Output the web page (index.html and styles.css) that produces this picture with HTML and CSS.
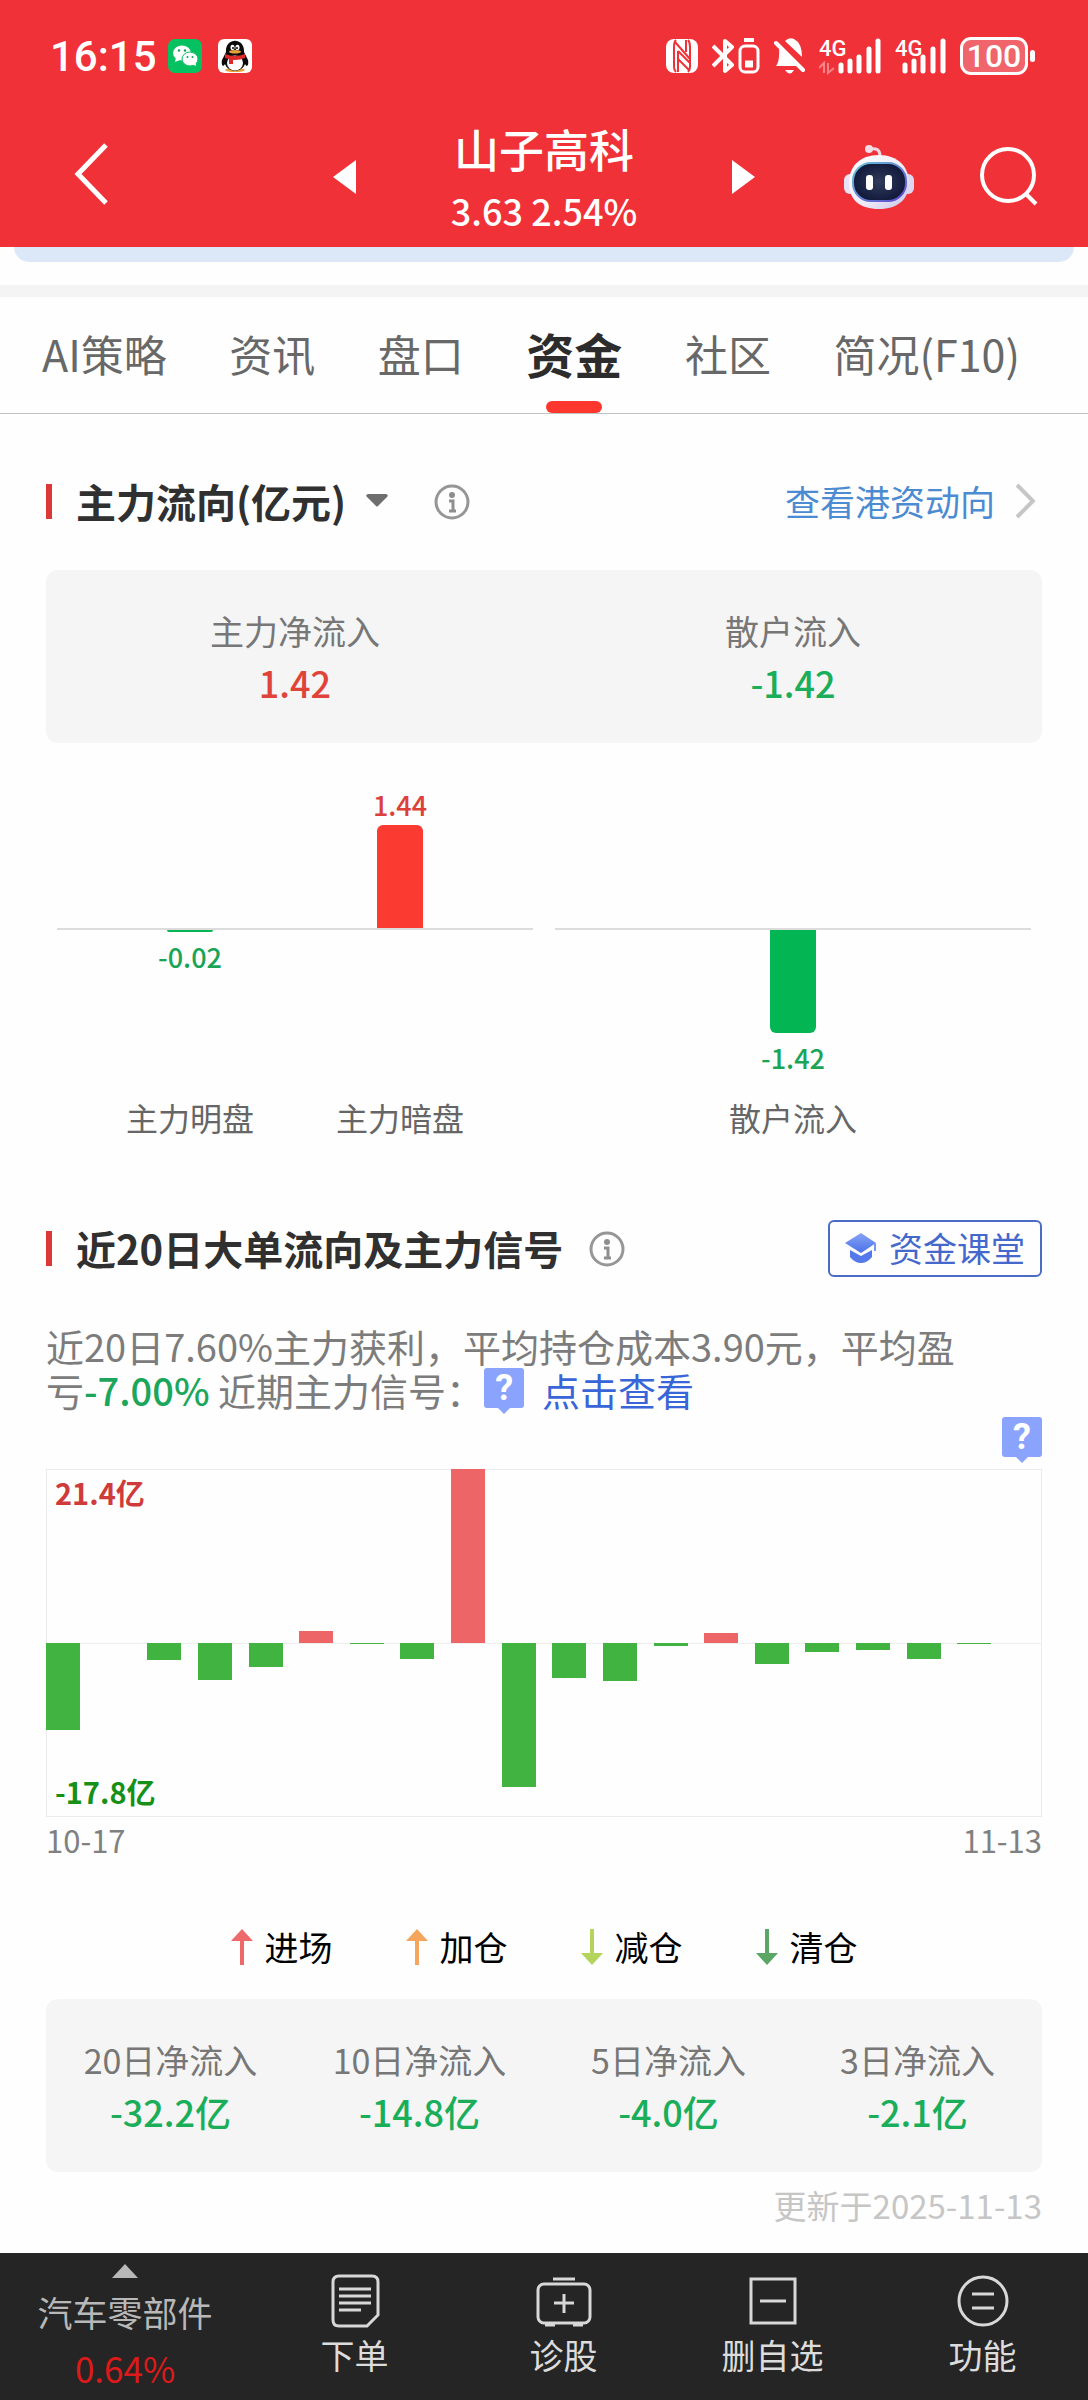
FILE: index.html
```
<!DOCTYPE html>
<html lang="zh-CN">
<head>
<meta charset="utf-8">
<meta name="viewport" content="width=device-width, initial-scale=1">
<title>山子高科 - 资金</title>
<link rel="stylesheet" href="styles.css">
</head>
<body>
<header class="top">
  <div class="status">
    <span class="clock">16:15</span>
    <svg class="app-icon" viewBox="0 0 34 34" aria-label="微信"><rect width="34" height="34" rx="7" fill="#05c160"/><g fill="#fff"><ellipse cx="14" cy="14" rx="9" ry="7.500"/><path d="M8 18l-1 5 5-2z"/><ellipse cx="22" cy="20" rx="8" ry="7" stroke="#05c160"/><path d="M24 25l4 2-.5-4z"/></g><g fill="#05a050"><circle cx="11" cy="11.500" r="1.200"/><circle cx="17" cy="11.500" r="1.200"/><circle cx="19.500" cy="18" r="1"/><circle cx="24.500" cy="18" r="1"/></g></svg>
    <svg class="app-icon qq" viewBox="0 0 34 34" aria-label="QQ"><rect width="34" height="34" rx="6" fill="#fff"/><ellipse cx="17" cy="31" rx="10" ry="2" fill="#e6a43a"/><path d="M8 13c-1-15 19-15 18 0l4 8c1 5-1 8-3 4-3 9-17 9-20 0-2 4-4 1-3-4z" fill="#0a0a0a"/><ellipse cx="17" cy="24" rx="8" ry="7.500" fill="#fff"/><ellipse cx="14.500" cy="8.500" rx="2" ry="2.800" fill="#fff"/><ellipse cx="19.500" cy="8.500" rx="2" ry="2.800" fill="#fff"/><circle cx="15" cy="9" r="1"/><circle cx="19" cy="9" r="1"/><ellipse cx="17" cy="12.800" rx="6" ry="1.700" fill="#eaa13a"/><path d="M7 15q10 4 20 0v4q-6 2.500-12 2v4h-4v-5l-4-1z" fill="#dd2a2a"/></svg>
    <div class="indicators">
      <svg width="32" height="34" viewBox="0 0 32 34" aria-label="NFC"><rect width="32" height="34" rx="8" fill="#fff"/><g fill="none" stroke="#f03138" stroke-width="2"><path d="M10 1Q8 3 8 8v20q0 3 2 5M22 33q2-2 2-5V8q0-5-2-7M12 12v21M20 1v12M9 3l15 17M12 12l12 12M12 20l11 11"/></g></svg>
      <svg class="bt" width="48" height="36" viewBox="0 0 48 36" fill="none" stroke="#fff" aria-label="蓝牙"><path d="M1 8l19 19-7 6V3l7 6L1 28" stroke-width="4" stroke-linejoin="round"/><rect x="28" y="8" width="18" height="26" rx="5" stroke-width="3"/><path d="M32 2h10" stroke-width="4"/><path d="M33 26h8" stroke-width="7"/></svg>
      <svg class="bell" width="31" height="36" viewBox="0 0 31 36" fill="#fff" aria-label="静音"><path d="M11 3Q15-1 20 1q8 4 8 18zM5 9l19 19H2q4-5 3-19zM11 32h9q-4 7-9 0z"/><path d="M2 5l27 27" stroke="#fff" stroke-width="4" stroke-linecap="round"/></svg>
      <svg class="signal" width="64" height="38" viewBox="0 0 64 38" aria-label="信号"><text x="0" y="19">4G</text><g stroke="#fff" stroke-width="5" stroke-linecap="round"><path d="M22 28v6M31 24v10M40 20v14M50 12v22M59 4v30"/></g><path d="M0 31l5-5v10M9 26v10l6-5" stroke="#f98488" stroke-width="2" fill="none"/></svg>
      <svg class="signal second" width="52" height="38" viewBox="0 0 52 38" aria-label="信号"><text x="0" y="19">4G</text><g stroke="#fff" stroke-width="5" stroke-linecap="round"><path d="M10 28v6M19 24v10M28 20v14M38 12v22M48 4v30"/></g></svg>
      <span class="battery">100</span>
    </div>
  </div>
  <div class="titlebar">
    <div class="bar-left">
      <button type="button" aria-label="返回"><svg width="34" height="62" viewBox="0 0 34 62" fill="none" stroke="#fff" stroke-width="5"><path d="M32 2L4 31l28 29"/></svg></button>
    </div>
    <div class="bar-mid">
      <button type="button" aria-label="上一只"><svg width="23" height="34" viewBox="0 0 23 34"><path d="M23 0v34L0 17z" fill="#fff"/></svg></button>
      <div class="stock"><h1>山子高科</h1><p>3.63 2.54%</p></div>
      <button type="button" aria-label="下一只"><svg width="23" height="34" viewBox="0 0 23 34"><path d="M0 0v34l23-17z" fill="#fff"/></svg></button>
    </div>
    <div class="bar-right">
      <button type="button" aria-label="智能助手"><svg width="70" height="66" viewBox="0 0 70 66">
        <defs><linearGradient id="shell" x2="1" y2="1"><stop offset="0" stop-color="#fff"/><stop offset=".6" stop-color="#eeeaf8"/><stop offset="1" stop-color="#c4c2e6"/></linearGradient><linearGradient id="rim" x2="1" y2="1"><stop offset="0" stop-color="#65c6d8"/><stop offset="1" stop-color="#6043cc"/></linearGradient><radialGradient id="visor"><stop offset="0" stop-color="#303a5a"/><stop offset="1" stop-color="#121b3c"/></radialGradient></defs>
        <path d="M26 5q10-2 10 7" fill="none" stroke="#efd6e2" stroke-width="3"/><circle cx="25" cy="5" r="4" fill="#f3dce6"/>
        <rect y="30" width="12" height="20" rx="6" fill="#e8e4f5"/><rect x="58" y="30" width="12" height="20" rx="6" fill="#dcd8f0"/>
        <path d="M35 11C54 11 65 23 65 39S54 65 35 65 5 56 5 39s11-28 30-28z" fill="url(#shell)"/>
        <rect x="9" y="19" width="53" height="38" rx="18" fill="url(#visor)" stroke="url(#rim)" stroke-width="2"/>
        <rect x="22" y="31" width="7" height="15" rx="3" fill="#fff"/><rect x="41" y="31" width="7" height="15" rx="3" fill="#fff"/></svg></button>
      <button type="button" aria-label="搜索"><svg width="58" height="60" viewBox="0 0 58 60" fill="none" stroke="#fff" stroke-width="4"><circle cx="28" cy="28" r="26"/><path d="M46 47l10 10"/></svg></button>
    </div>
  </div>
</header>
<div class="banner-edge"></div>

<nav class="tabs" aria-label="栏目">
  <a href="#ai">AI策略</a>
  <a href="#news">资讯</a>
  <a href="#quote">盘口</a>
  <a href="#fund" class="active" aria-current="page">资金</a>
  <a href="#club">社区</a>
  <a href="#f10">简况(F10)</a>
</nav>

<main>
  <section class="flow">
    <div class="head">
      <h2><button type="button">主力流向(亿元)<svg width="22" height="13" viewBox="0 0 22 13"><path d="M2 0h18q3 1 1 3l-9 9q-1 1-2 0L1 3q-2-2 1-3z" fill="#6e6e6e"/></svg></button></h2>
      <button type="button" class="info wide" aria-label="说明"><svg width="36" height="36" viewBox="0 0 36 36"><circle cx="18" cy="18" r="16" fill="none" stroke="#969696" stroke-width="3"/><circle cx="18" cy="11" r="3" fill="#8e8e8e"/><path d="M15 17h4v10M15 27h7" fill="none" stroke="#8e8e8e" stroke-width="3"/></svg></button>
      <a class="more" href="#hk">查看港资动向<svg width="20" height="36" viewBox="0 0 20 36" fill="none" stroke="#c6c6c6" stroke-width="4"><path d="M2 2l16 16L2 34"/></svg></a>
    </div>
    <dl class="card two">
      <div><dt>主力净流入</dt><dd class="up">1.42</dd></div>
      <div><dt>散户流入</dt><dd class="down">-1.42</dd></div>
    </dl>
    <div class="plots">
      <div class="plot">
        <div class="col"><div class="above"></div><div class="below"><i style="height:2px"></i><b>-0.02</b></div><span>主力明盘</span></div>
        <div class="col"><div class="above"><b>1.44</b><i style="height:103px"></i></div><div class="below"></div><span>主力暗盘</span></div>
      </div>
      <div class="plot">
        <div class="col"><div class="above"></div><div class="below"><i style="height:103px"></i><b>-1.42</b></div><span>散户流入</span></div>
      </div>
    </div>
  </section>

  <section class="signal-section">
    <div class="head">
      <h2>近20日大单流向及主力信号</h2>
      <button type="button" class="info" aria-label="说明"><svg width="36" height="36" viewBox="0 0 36 36"><circle cx="18" cy="18" r="16" fill="none" stroke="#969696" stroke-width="3"/><circle cx="18" cy="11" r="3" fill="#8e8e8e"/><path d="M15 17h4v10M15 27h7" fill="none" stroke="#8e8e8e" stroke-width="3"/></svg></button>
      <button type="button" class="class-btn"><svg width="32" height="30" viewBox="0 0 32 30"><defs><linearGradient id="cap" x2="0" y2="1"><stop offset="0" stop-color="#86a5f6"/><stop offset="1" stop-color="#4a70e8"/></linearGradient></defs><path d="M16 0l15 10-15 10L0 10z" fill="url(#cap)"/><path d="M5 17l11 6 11-6v7q-5 6-11 6T5 24z" fill="#5579ea"/><path d="M30 10v8" stroke="#7896f2" stroke-width="2"/></svg>资金课堂</button>
    </div>
    <p class="summary">近20日7.60%主力获利，平均持仓成本3.90元，平均盈亏<strong>-7.00%</strong> 近期主力信号：<span class="mark">?</span><a href="#signal">点击查看</a></p>
    <div class="marks"><span class="mark">?</span></div>
    <div class="bars">
      <span class="max">21.4亿</span><span class="min">-17.8亿</span>
      <div class="neg"><i style="height:50%"></i></div>
      <div class="neg"><i style="height:0"></i></div>
      <div class="neg"><i style="height:10%"></i></div>
      <div class="neg"><i style="height:21%"></i></div>
      <div class="neg"><i style="height:14%"></i></div>
      <div class="pos"><i style="height:7%"></i></div>
      <div class="neg"><i style="height:1px"></i></div>
      <div class="neg"><i style="height:9%"></i></div>
      <div class="pos"><i style="height:100%"></i></div>
      <div class="neg"><i style="height:83%"></i></div>
      <div class="neg"><i style="height:20%"></i></div>
      <div class="neg"><i style="height:22%"></i></div>
      <div class="neg"><i style="height:2%"></i></div>
      <div class="pos"><i style="height:6%"></i></div>
      <div class="neg"><i style="height:12%"></i></div>
      <div class="neg"><i style="height:5%"></i></div>
      <div class="neg"><i style="height:4%"></i></div>
      <div class="neg"><i style="height:9%"></i></div>
      <div class="neg"><i style="height:1px"></i></div>
      <div class="neg"><i style="height:0"></i></div>
    </div>
    <div class="dates"><time>10-17</time><time>11-13</time></div>
    <ul class="legend">
      <li><svg viewBox="0 0 22 36" fill="#ee6a6a"><path d="M11 0l11 12H13v24H9V12H0z"/></svg>进场</li>
      <li><svg viewBox="0 0 22 36" fill="#f5a55c"><path d="M11 0l11 12H13v24H9V12H0z"/></svg>加仓</li>
      <li><svg viewBox="0 0 22 36" fill="#b4d45c"><path d="M11 36L0 24h9V0h4v24h9z"/></svg>减仓</li>
      <li><svg viewBox="0 0 22 36" fill="#5ba664"><path d="M11 36L0 24h9V0h4v24h9z"/></svg>清仓</li>
    </ul>
    <dl class="card four">
      <div><dt>20日净流入</dt><dd class="down">-32.2亿</dd></div>
      <div><dt>10日净流入</dt><dd class="down">-14.8亿</dd></div>
      <div><dt>5日净流入</dt><dd class="down">-4.0亿</dd></div>
      <div><dt>3日净流入</dt><dd class="down">-2.1亿</dd></div>
    </dl>
    <p class="updated">更新于2025-11-13</p>
  </section>
</main>

<nav class="dock" aria-label="操作">
  <button type="button" class="sector"><svg width="26" height="14" viewBox="0 0 26 14"><path d="M13 0l13 14H0z" fill="#b8b8b8"/></svg><span>汽车零部件</span><em>0.64%</em></button>
  <button type="button"><svg width="56" height="54" viewBox="0 0 56 54"><path d="M12 2h33q6 0 6 6v33L40 52H12q-6 0-6-6V8q0-6 6-6z"/><path d="M12 15h32M12 22h32M12 29h32M12 36h22"/></svg>下单</button>
  <button type="button"><svg width="56" height="54" viewBox="0 0 56 54"><rect x="2" y="10" width="52" height="39" rx="6"/><path d="M17 5h22M28 20v19M18 29h20M9 51h10M37 51h10"/></svg>诊股</button>
  <button type="button"><svg width="56" height="54" viewBox="0 0 56 54"><path d="M6 5h44v44H6zM15 27h26"/></svg>删自选</button>
  <button type="button"><svg width="56" height="54" viewBox="0 0 56 54"><circle cx="28" cy="27" r="24"/><path d="M17 20h22M17 34h22"/></svg>功能</button>
</nav>
</body>
</html>
```
FILE: styles.css
```
* { box-sizing: border-box; }
body {
  margin: 0;
  min-height: 100vh;
  display: flex;
  flex-direction: column;
  background: #fefefe;
  color: #303030;
  font-family: "Noto Sans CJK SC", "Noto Sans", sans-serif;
}
h1, h2, p, dl, dd, ul { margin: 0; padding: 0; }
button {
  padding: 0;
  border: 0;
  background: none;
  color: inherit;
  font: inherit;
  cursor: pointer;
}
svg { display: block; flex: none; }
a { text-decoration: none; }
i, em { font-style: normal; }

/* status bar and title bar */
.top { background: #f03138; color: #fff; }
.status {
  display: flex;
  align-items: center;
  height: 112px;
  padding: 0 60px 0 50px;
}
.clock {
  font-family: Roboto, "Noto Sans CJK SC", sans-serif;
  font-size: 42px;
  font-weight: 500;
  width: 118px;
}
.app-icon { width: 34px; height: 34px; }
.qq { margin-left: 16px; }
.indicators { display: flex; align-items: center; margin-left: auto; }
.bt { margin-left: 14px; }
.bell { margin-left: 14px; }
.signal { margin-left: 14px; }
.signal.second { margin-left: 12px; }
.signal text {
  fill: #fff;
  font-family: Roboto, sans-serif;
  font-size: 22px;
  font-weight: 500;
}
.battery {
  position: relative;
  width: 68px;
  height: 38px;
  margin-left: 13px;
  border: 3px solid #fff;
  border-radius: 11px;
  background: #f0646c;
  font: 500 32px/32px Roboto, sans-serif;
  text-align: center;
}
.battery::after {
  content: "";
  position: absolute;
  right: -10px;
  top: 10px;
  width: 5px;
  height: 12px;
  border-radius: 3px;
  background: #fff;
}
.titlebar {
  display: grid;
  grid-template-columns: 1fr 422px 1fr;
  align-items: center;
  padding-bottom: 6px;
}
.bar-left { padding-left: 74px; }
.bar-mid { display: flex; align-items: center; justify-content: space-between; }
.bar-right { display: flex; align-items: center; justify-content: flex-end; gap: 66px; padding-right: 50px; }
.stock { padding-top: 7px; text-align: center; }
.stock h1 { font-size: 45px; font-weight: 500; line-height: 60px; }
.stock p { font-size: 36px; font-weight: 500; line-height: 62px; }

.banner-edge { background: #fefefe; border-bottom: 12px solid #f4f4f4; padding: 0 14px 23px; }
.banner-edge::before {
  content: "";
  display: block;
  height: 15px;
  border-radius: 0 0 18px 18px;
  background: #dce8f7;
}

/* tabs */
.tabs {
  display: flex;
  align-items: stretch;
  justify-content: space-between;
  height: 117px;
  padding: 0 68px 0 42px;
  border-bottom: 1px solid #c2c2c2;
}
.tabs a {
  position: relative;
  color: #686868;
  font-size: 43px;
  line-height: 112px;
  white-space: nowrap;
}
.tabs .active { color: #2c2c2c; font-size: 48px; font-weight: 700; }
.tabs .active::after {
  content: "";
  position: absolute;
  left: 50%;
  bottom: 0;
  width: 56px;
  height: 12px;
  margin-left: -28px;
  border-radius: 6px;
  background: #fd372d;
}

/* section heads */
main { padding: 0 46px 24px; }
.flow { padding-top: 59px; }
.signal-section { padding-top: 76px; }
.head { display: flex; align-items: center; height: 57px; }
.head::before { content: ""; width: 6px; height: 35px; margin-right: 24px; background: #dd3838; }
.head h2 { padding-bottom: 2px; font-size: 40px; font-weight: 700; line-height: 54px; }
.head h2 button { display: flex; align-items: center; gap: 20px; }
.info { margin-left: 26px; }
.info.wide { margin-left: 46px; }
.more {
  display: flex;
  align-items: center;
  gap: 20px;
  margin-left: auto;
  padding: 0 7px 2px 0;
  color: #4b8bd2;
  font-size: 35px;
}
.class-btn {
  display: flex;
  align-items: center;
  gap: 12px;
  height: 57px;
  margin-left: auto;
  padding: 0 15px 2px;
  border: 2px solid #4a6cc4;
  border-radius: 6px;
  color: #4468cc;
  font-size: 34px;
}

/* figure cards */
.card {
  display: grid;
  padding: 36px 0 35px;
  border-radius: 12px;
  background: #f5f5f5;
  text-align: center;
}
.two { grid-template-columns: 1fr 1fr; margin-top: 40px; }
.four { grid-template-columns: repeat(4, 1fr); margin-top: 27px; }
.card dt { color: #777; font-size: 34px; line-height: 50px; }
.card dd { font-size: 36px; font-weight: 500; line-height: 52px; }
.card .up { color: #e0433a; }
.card .down { color: #1aae5a; }

/* main and retail flow columns */
.plots {
  display: grid;
  grid-template-columns: 1fr 1fr;
  gap: 22px;
  padding: 43px 11px 0;
}
.plot {
  display: flex;
  justify-content: center;
  background: linear-gradient(#dcdcdc, #dcdcdc) 0 142px / 100% 2px no-repeat;
}
.col { width: 210px; text-align: center; }
.above, .below { display: flex; flex-direction: column; align-items: center; }
.above { height: 142px; justify-content: flex-end; }
.below { height: 162px; padding-top: 2px; }
.plot i { flex: none; width: 46px; }
.above i { border-radius: 6px 6px 0 0; background: #fb3b32; }
.below i { border-radius: 0 0 6px 6px; background: #04b553; }
.plot b { font-size: 27px; font-weight: 500; line-height: 40px; }
.above b { color: #dc4038; }
.below b { margin-top: 5px; color: #1aa456; }
.col span { display: block; color: #666; font-size: 32px; line-height: 54px; }

/* twenty-day chart */
.summary {
  margin-top: 47px;
  padding-right: 70px;
  color: #7c7c7c;
  font-size: 38px;
  line-height: 44px;
}
.summary strong { color: #1ba65c; font-weight: 500; }
.summary a { color: #3865d8; }
.summary .mark { margin: 0 18px 0 0; vertical-align: top; }
.mark {
  position: relative;
  display: inline-block;
  width: 40px;
  height: 40px;
  border-radius: 3px;
  background: #8aa3fc;
  color: #fff;
  font: 700 36px/40px Roboto, sans-serif;
  text-align: center;
}
.mark::after {
  content: "";
  position: absolute;
  left: 14px;
  top: 40px;
  border: 6px solid transparent;
  border-top-color: #8aa3fc;
  border-bottom: 0;
}
.marks { display: flex; justify-content: flex-end; height: 57px; padding-top: 5px; }
.bars {
  position: relative;
  display: flex;
  justify-content: space-between;
  height: 348px;
  background: linear-gradient(#ededed, #ededed) 0 174px / 100% 1px no-repeat;
  box-shadow: inset 0 0 0 1px #ebebeb;
}
/* each day's bar grows from the zero line at mid height */
.bars div { display: flex; width: 34px; height: 50%; }
.bars i { width: 100%; }
.neg { align-self: flex-end; align-items: flex-start; }
.pos { align-self: flex-start; align-items: flex-end; }
.neg i { background: #41b341; }
.pos i { background: #ee6567; }
.max, .min { position: absolute; left: 9px; font-size: 29px; font-weight: 700; line-height: 40px; }
.max { top: 3px; color: #cf3b3b; }
.min { bottom: 6px; color: #169016; }
.dates { display: flex; justify-content: space-between; color: #808080; font-size: 31px; line-height: 46px; }
.legend {
  display: flex;
  justify-content: center;
  gap: 73px;
  margin-top: 59px;
  list-style: none;
  color: #000;
  font-size: 34px;
  line-height: 50px;
}
.legend li { display: flex; align-items: center; gap: 12px; }
.legend svg { width: 22px; height: 36px; }
.updated { margin-top: 11px; color: #c6c6c6; font-size: 33px; line-height: 44px; text-align: right; }

/* bottom dock */
.dock {
  display: grid;
  grid-template-columns: 250fr 209fr 209fr 209fr 211fr;
  height: 147px;
  margin-top: auto;
  background: #252525;
  color: #dcdcdc;
  font-size: 34px;
}
.dock button {
  display: flex;
  flex-direction: column;
  align-items: center;
  padding-top: 21px;
  line-height: 54px;
}
.dock button svg { fill: none; stroke: #d8d8d8; stroke-width: 3; }
.dock .sector { padding-top: 11px; color: #b8b8b8; }
.dock .sector svg { stroke: none; }
.dock .sector span { padding-top: 5px; font-size: 35px; line-height: 58px; }
.dock .sector em { color: #dc1a1a; font-size: 35px; }
```
